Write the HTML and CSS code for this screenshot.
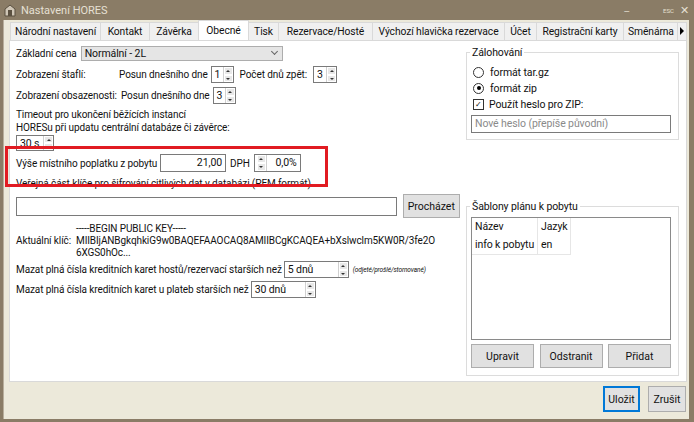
FILE: index.html
```html
<!DOCTYPE html>
<html lang="cs">
<head>
<meta charset="utf-8">
<title>Nastavení HORES</title>
<link rel="stylesheet" href="styles.css">
</head>
<body>
<div class="win">
  <div class="titlebar">
    <svg class="appicon" width="12" height="13" viewBox="0 0 12 13">
      <path d="M1 5 L6 1 L11 5 L11 12 L1 12 Z" fill="#cfc6b6" stroke="#5a5040" stroke-width="1"/>
      <rect x="4" y="6" width="4" height="6" fill="#5a5040"/>
    </svg>
    <span class="title">Nastavení HORES</span>
    <span class="tb-min">_</span>
    <span class="tb-esc">ESC</span>
    <span class="tb-close">✕</span>
  </div>
  <div class="client">
    <div class="tabs">
      <span class="tab t90">Národní nastavení</span>
      <span class="tab t49">Kontakt</span>
      <span class="tab t49">Závěrka</span>
      <span class="tab t50 active">Obecné</span>
      <span class="tab t30">Tisk</span>
      <span class="tab t94">Rezervace/Hosté</span>
      <span class="tab t132">Výchozí hlavička rezervace</span>
      <span class="tab t32">Účet</span>
      <span class="tab t87">Registrační karty</span>
      <span class="tab t54 cut">Směnárna</span>
      <span class="tab-arrow"></span>
    </div>
    <div class="panel">
      <div class="col-left">
        <div class="row r1">
          <span class="lbl">Základní cena</span>
          <div class="combo"><span>Normální - 2L</span><i class="chev"></i></div>
        </div>
        <div class="row r2">
          <span class="lbl w103">Zobrazení štaflí:</span>
          <span class="lbl">Posun dnešního dne</span>
          <div class="spin s23"><span class="val">1</span><span class="arrows"><i class="up"></i><i class="dn"></i></span></div>
          <span class="lbl ml6">Počet dnů zpět:</span>
          <div class="spin s24"><span class="val">3</span><span class="arrows"><i class="up"></i><i class="dn"></i></span></div>
        </div>
        <div class="row r3">
          <span class="lbl mr3">Zobrazení obsazenosti:</span>
          <span class="lbl">Posun dnešního dne</span>
          <div class="spin s23"><span class="val">3</span><span class="arrows"><i class="up"></i><i class="dn"></i></span></div>
        </div>
        <p class="para timeout">Timeout pro ukončení běžících instancí<br>HORESu při updatu centrální databáze či závěrce:</p>
        <div class="spin s38"><span class="val">30 s</span><span class="arrows"><i class="up"></i><i class="dn"></i></span></div>
        <div class="row r-fee">
          <span class="lbl fee-lbl">Výše místního poplatku z pobytu</span>
          <div class="input num">21,00</div>
          <span class="lbl ml4">DPH</span>
          <div class="spin spin-left"><span class="arrows"><i class="up"></i><i class="dn"></i></span><span class="val">0,0%</span></div>
        </div>
        <p class="para keylbl">Veřejná část klíče pro šifrování citlivých dat v databázi (PEM formát)</p>
        <div class="row r-file">
          <div class="input file"></div>
          <button class="btn browse">Procházet</button>
        </div>
        <div class="keyblock">
          <span class="lbl keyname">Aktuální klíč:</span>
          <span class="keytext">-----BEGIN PUBLIC KEY-----<br>MIIBIjANBgkqhkiG9w0BAQEFAAOCAQ8AMIIBCgKCAQEA+bXslwclm5KW0R/3fe2O<br>6XGS0hOc...</span>
        </div>
        <div class="row r-del1">
          <span class="lbl">Mazat plná čísla kreditních karet hostů/rezervací starších než</span>
          <div class="spin s65"><span class="val">5 dnů</span><span class="arrows"><i class="up"></i><i class="dn"></i></span></div>
          <span class="note">(odjeté/prošlé/stornované)</span>
        </div>
        <div class="row r-del2">
          <span class="lbl">Mazat plná čísla kreditních karet u plateb starších než</span>
          <div class="spin s65"><span class="val">30 dnů</span><span class="arrows"><i class="up"></i><i class="dn"></i></span></div>
        </div>
      </div>
      <div class="col-right">
        <fieldset class="group backup">
          <legend>Zálohování</legend>
          <label class="opt"><span class="radio"></span>formát tar.gz</label>
          <label class="opt"><span class="radio on"></span>formát zip</label>
          <label class="opt"><span class="check">✓</span>Použít heslo pro ZIP:</label>
          <div class="input pwd">Nové heslo (přepíše původní)</div>
        </fieldset>
        <fieldset class="group plans">
          <legend>Šablony plánu k pobytu</legend>
          <div class="listbox">
            <table class="grid">
              <tr><td class="c1">Název</td><td class="c2">Jazyk</td></tr>
              <tr><td class="c1">info k pobytu</td><td class="c2">en</td></tr>
            </table>
          </div>
          <div class="plan-btns">
            <button class="btn">Upravit</button>
            <button class="btn">Odstranit</button>
            <button class="btn">Přidat</button>
          </div>
        </fieldset>
      </div>
      <div class="mark"></div>
    </div>
    <div class="footer">
      <button class="btn btn-default">Uložit</button>
      <button class="btn">Zrušit</button>
    </div>
  </div>
</div>
</body>
</html>
```

FILE: styles.css
```css
body{margin:0; background:#8a7c66; font-family:Roboto,"Liberation Sans",sans-serif; font-size:10px; letter-spacing:-0.1px; color:#111;}
.win{width:694px; height:422px; overflow:hidden;}

.titlebar{
  height:20px;
  display:flex;
  align-items:center;
  color:#e6e0d4;
  font-size:11px;
  letter-spacing:0;
}
.appicon{margin:0 5px 0 4px;}
.title{flex:1;}
.tb-min{margin-right:34px; margin-top:-6px; color:#d8d0c2;}
.tb-esc{font-size:6px; margin-right:6px;}
.tb-close{font-size:11px; margin-right:5px;}

.client{
  margin:0 5px 0 3px;
  height:399px;
  background:#ece9da;
  border-left:1px solid #b8ae9c;
  box-sizing:border-box;
}

.tabs{display:flex; padding:2px 0 0 6px; height:20px; box-sizing:border-box;}
.tab{
  height:18px;
  line-height:18px;
  text-align:center;
  background:#f0f0f0;
  border:1px solid #d9d9d9;
  border-bottom:none;
  margin-right:-1px;
  white-space:nowrap;
  box-sizing:border-box;
  font-size:10.3px;
}
.tab.active{background:#fff; height:20px; margin-top:-2px; line-height:20px; position:relative; z-index:2;}
.t90{width:91px;} .t49{width:50px;} .t50{width:51px;} .t30{width:31px;} .t94{width:95px;}
.t132{width:133px;} .t32{width:33px;} .t87{width:88px;} .t54{width:55px;}
.tab.cut{overflow:hidden; text-align:left; padding-left:4px;}
.tab-arrow{
  width:10px; height:18px; background:#f0f0f0; border:1px solid #d9d9d9; border-bottom:none;
  box-sizing:border-box; position:relative;
}
.tab-arrow::after{
  content:""; position:absolute; left:2px; top:4px;
  border-left:4px solid #000; border-top:4px solid transparent; border-bottom:4px solid transparent;
}

.panel{
  margin-left:5px;
  width:678px;
  height:342px;
  background:#fff;
  border:1px solid #d9d9d9;
  box-sizing:border-box;
  display:flex;
  position:relative;
}
.col-left{width:450px; padding:4px 0 0 6px; box-sizing:border-box;}
.col-right{flex:1; padding:5px 7px 0 6px;}

.row{display:flex; align-items:center; white-space:nowrap;}
.lbl{white-space:nowrap;}
.w103{width:103px;}
.mr3{margin-right:4px;}
.ml6{margin-left:6px; margin-right:3px;}
.ml4{margin-left:4px; margin-right:4px;}
.r1{height:16px;}
.r1 .lbl{margin-right:4px;}
.r2{height:17px; margin-top:5px;}
.r2 .spin,.r3 .spin{margin-left:3px;}
.r3{height:17px; margin-top:4px;}

.combo{
  width:202px; height:15px; background:#e5e5e5; border:1px solid #adadad;
  box-sizing:border-box; display:flex; align-items:center; padding-left:3px;
  font-size:10.5px;
}
.combo span{flex:1;}
.chev{
  width:4px; height:4px; border-right:1px solid #666; border-bottom:1px solid #666;
  transform:rotate(45deg); margin:0 5px 3px 0;
}

.spin{
  height:17px; border:1px solid #7a7a7a; box-sizing:border-box;
  display:flex; background:#fff;
}
.spin .val{flex:1; padding-left:3px; line-height:15px; font-size:10.5px;}
.arrows{width:9px; display:flex; flex-direction:column; border-left:1px solid #d0d0d0;}
.arrows i{flex:1; background:#e8e8e8; position:relative; border:1px solid #fff; box-sizing:border-box;}
.arrows i::after{content:""; position:absolute; left:1.5px; border-left:2px solid transparent; border-right:2px solid transparent;}
.arrows .up::after{top:2px; border-bottom:2px solid #333;}
.arrows .dn::after{top:2px; border-top:2px solid #333;}
.s23{width:23px;}
.s24{width:24px;}
.s38{width:38px; height:16px; margin-top:1px;}
.s65{width:65px; margin-left:2px;}

.para{margin:0; line-height:13px;}
.timeout{margin-top:4px;}

.r-fee{height:18px; margin-top:3px;}
.fee-lbl{width:144px;}
.input{border:1px solid #7a7a7a; box-sizing:border-box; background:#fff; height:18px; line-height:16px;}
.num{width:66px; text-align:right; padding-right:3px; font-size:10.5px;}
.spin-left{width:47px; height:18px;}
.spin-left .arrows{border-left:none; border-right:1px solid #d0d0d0; margin-left:2px;}
.spin-left .val{text-align:right; padding-right:3px; padding-left:0; line-height:16px;}

.keylbl{margin-top:5px;}
.r-file{margin-top:4px; height:24px;}
.file{width:384px; height:19px;}
.btn{
  font:inherit; font-size:10.5px; color:#111;
  background:#e1e1e1; border:1px solid #adadad; padding:0;
}
.browse{width:58px; height:24px; margin-left:6px;}

.keyblock{display:flex; align-items:center; margin-top:5px; line-height:12px;}
.keyname{width:60px;}
.keytext{white-space:nowrap;}

.r-del1{height:17px; margin-top:2px;}
.r-del2{height:17px; margin-top:3px;}
.note{font-size:6.5px; font-style:italic; margin-left:4px;}

.group{border:1px solid #dcdcdc; margin:0; padding:0 4px 6px 4px;}
.group legend{padding:0 2px; margin-left:-1px; font-size:10.5px;}
.backup{padding-top:5px;}
.opt{display:flex; align-items:center; height:16px; font-size:10.5px;}
.radio{
  width:11px; height:11px; border:1px solid #333; border-radius:50%;
  margin:0 6px 0 2px; box-sizing:border-box; position:relative;
}
.radio.on::after{content:""; position:absolute; left:2.5px; top:2.5px; width:4px; height:4px; border-radius:50%; background:#000;}
.check{
  width:11px; height:11px; border:1px solid #333; box-sizing:border-box;
  margin:0 5px 0 2px; font-size:8px; line-height:9px; text-align:center;
}
.pwd{width:200px; height:18px; margin-top:3px; color:#8a8a8a; padding-left:3px; font-size:10.5px;}

.plans{margin-top:60px; padding-bottom:7px;}
.listbox{width:200px; height:123px; border:1px solid #8a8a8a; box-sizing:border-box; margin-top:4px;}
.grid{border-collapse:collapse; font-size:10.5px;}
.grid td{height:18px; line-height:18px; padding:0 2px 0 3px; border-right:1px solid #e6e6e6; white-space:nowrap;}
.grid tr:last-child td{border-bottom:1px solid #e6e6e6;}
.grid .c1{width:60px;}
.grid .c2{width:27px;}
.plan-btns{display:flex; justify-content:space-between; width:200px; margin-top:4px;}
.plan-btns .btn{width:63px; height:24px;}

.mark{
  position:absolute; left:-5px; top:105px; width:323px; height:41px;
  border:3px solid #e11b22; box-sizing:border-box;
}

.footer{display:flex; justify-content:flex-end; gap:8px; padding:4px 3px 0 0;}
.footer .btn{width:38px; height:26px;}
.footer .btn-default{width:37px; border:2px solid #0078d7;}
```
